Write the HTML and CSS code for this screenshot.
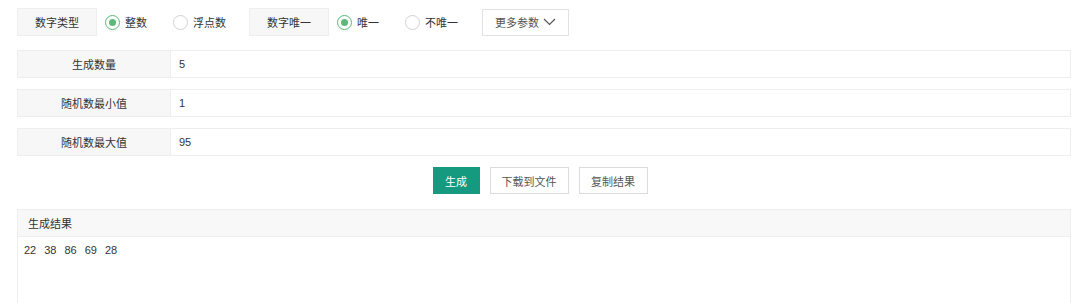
FILE: index.html
```html
<!DOCTYPE html>
<html lang="zh">
<head>
<meta charset="utf-8">
<link rel="stylesheet" href="styles.css">
</head>
<body>
<div class="page">
  <div class="opts">
    <div class="tag">数字类型</div>
    <label class="radio on"><span class="dot"></span><span class="rt">整数</span></label>
    <label class="radio"><span class="dot"></span><span class="rt">浮点数</span></label>
    <div class="tag">数字唯一</div>
    <label class="radio on"><span class="dot"></span><span class="rt">唯一</span></label>
    <label class="radio"><span class="dot"></span><span class="rt">不唯一</span></label>
    <button class="more">更多参数
      <svg width="13" height="8" viewBox="0 0 13 8"><path d="M1 1 L6.5 6.5 L12 1" fill="none" stroke="#555" stroke-width="1.2"/></svg>
    </button>
  </div>
  <div class="field"><div class="fl">生成数量</div><div class="fv">5</div></div>
  <div class="field"><div class="fl">随机数最小值</div><div class="fv">1</div></div>
  <div class="field"><div class="fl">随机数最大值</div><div class="fv">95</div></div>
  <div class="actions">
    <button class="btn primary">生成</button>
    <button class="btn w5">下载到文件</button>
    <button class="btn w4">复制结果</button>
  </div>
  <div class="result">
    <div class="rh">生成结果</div>
    <div class="rb"><span class="n">22</span><span class="n">38</span><span class="n">86</span><span class="n">69</span><span class="n">28</span></div>
  </div>
</div>
</body>
</html>
```
FILE: styles.css
```css
* { box-sizing: border-box; }
html, body { margin: 0; background: #fff; }
body {
  font-family: "Liberation Sans", Arial, "Noto Sans CJK SC", sans-serif;
  font-size: 11px;
  color: #333;
  width: 1080px;
  height: 303px;
  overflow: hidden;
}
.page { padding: 8px 9px 0 17px; }
.opts { display: flex; align-items: center; height: 28px; }
.tag {
  height: 28px;
  width: 80px;
  background: #f7f7f7;
  border: 1px solid #eeeeee;
  display: flex; align-items: center; justify-content: center;
  color: #333;
}
.tag + .radio { margin-left: 8px; }
.radio { display: flex; align-items: center; margin-right: 26px; color: #333; }
.radio .dot {
  width: 15px; height: 15px; border-radius: 50%;
  border: 1px solid #d2d2d2;
  background: #fff;
  display: flex; align-items: center; justify-content: center;
  margin-right: 5px;
}
.radio.on .dot { border-color: #5fb878; }
.radio.on .dot::after {
  content: ""; width: 7px; height: 7px; border-radius: 50%; background: #5fb878;
}
.radio + .radio { margin-right: 23px; }
.opts .radio:last-of-type { margin-right: 24px; }
.more {
  height: 27px;
  width: 87px;
  border: 1px solid #e2e2e2;
  background: #fff;
  font: inherit;
  color: #555;
  display: flex; align-items: center; justify-content: center;
  gap: 4px;
  padding: 0;
}
.field {
  display: flex;
  height: 28px;
  border: 1px solid #eeeeee;
  margin-top: 11px;
}
.opts + .field { margin-top: 14px; }
.fl {
  width: 153px;
  background: #f7f7f7;
  border-right: 1px solid #eeeeee;
  display: flex; align-items: center; justify-content: center;
}
.fv { display: flex; align-items: center; padding-left: 8px; color: #333; }
.actions {
  display: flex; justify-content: center; gap: 10px;
  margin-top: 11px;
  padding-right: 8px;
}
.btn {
  height: 27px;
  padding: 0;
  border: 1px solid #dcdcdc;
  background: #fff;
  font: inherit;
  color: #555;
}
.btn.w5 { width: 79px; }
.btn.w4 { width: 69px; }
.btn.primary {
  background: #159a80;
  border-color: #159a80;
  color: #fff;
  width: 47px;
}
.result {
  margin-top: 15px;
  border: 1px solid #eeeeee;
  height: 120px;
}
.rh {
  height: 27px;
  background: #f8f8f8;
  border-bottom: 1px solid #eeeeee;
  display: flex; align-items: center;
  padding-left: 10px;
}
.rb { padding: 7px 6px; color: #333; display: flex; gap: 8px; }
```
